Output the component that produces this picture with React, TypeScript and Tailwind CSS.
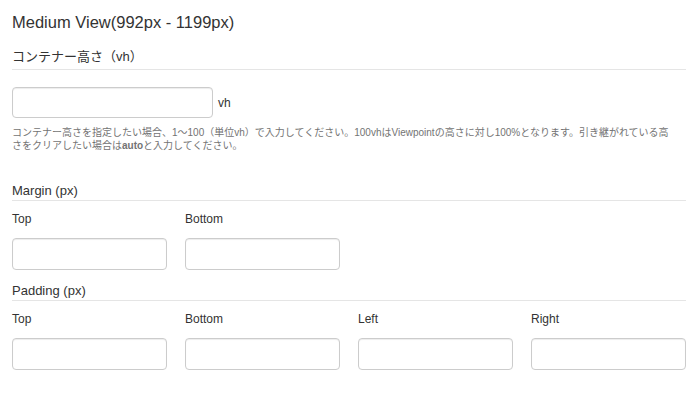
import React from "react";

const Field: React.FC<{ label: string }> = ({ label }) => (
  <div className="flex flex-col">
    <label className="mt-[10px] text-[12px] leading-[17px] text-[#333]">{label}</label>
    <input
      type="text"
      className="mt-[10px] h-[32px] w-full rounded-[4px] border border-[#ccc] bg-white shadow-[inset_0_1px_1px_rgba(0,0,0,0.075)] outline-none"
    />
  </div>
);

const SectionHeading: React.FC<{ title: string; className?: string }> = ({ title, className }) => (
  <h4 className={`border-b border-[#e5e5e5] pb-[1px] text-[13px] leading-[17px] text-[#333] ${className ?? ""}`}>
    {title}
  </h4>
);

export default function App() {
  return (
    <div className="h-[400px] w-[700px] overflow-hidden bg-white pl-3 pr-[14px] pt-3 font-['Liberation_Sans','Noto_Sans_CJK_JP',sans-serif] text-[#333]">
      <h3 className="text-[16.5px] leading-[20px]">Medium View(992px - 1199px)</h3>

      <h4 className="mt-[16px] border-b border-[#e5e5e5] pb-[4px] text-[13px] leading-[17px]">
        コンテナー高さ（vh）
      </h4>
      <div className="mt-[17px] flex items-center gap-[5px]">
        <input
          type="text"
          className="h-[31px] w-[201px] rounded-[4px] border border-[#ccc] bg-white shadow-[inset_0_1px_1px_rgba(0,0,0,0.075)] outline-none"
        />
        <span className="text-[12px]">vh</span>
      </div>
      <p className="mt-[8px] text-[10px] leading-[13px] text-[#737373]">
        コンテナー高さを指定したい場合、1〜100（単位vh）で入力してください。100vhはViewpointの高さに対し100%となります。引き継がれている高
        <br />
        さをクリアしたい場合は<b>auto</b>と入力してください。
      </p>

      <SectionHeading title="Margin (px)" className="mt-[30px]" />
      <div className="grid grid-cols-4 gap-x-[18px]">
        <Field label="Top" />
        <Field label="Bottom" />
      </div>

      <SectionHeading title="Padding (px)" className="mt-[12px]" />
      <div className="grid grid-cols-4 gap-x-[18px]">
        <Field label="Top" />
        <Field label="Bottom" />
        <Field label="Left" />
        <Field label="Right" />
      </div>
    </div>
  );
}
